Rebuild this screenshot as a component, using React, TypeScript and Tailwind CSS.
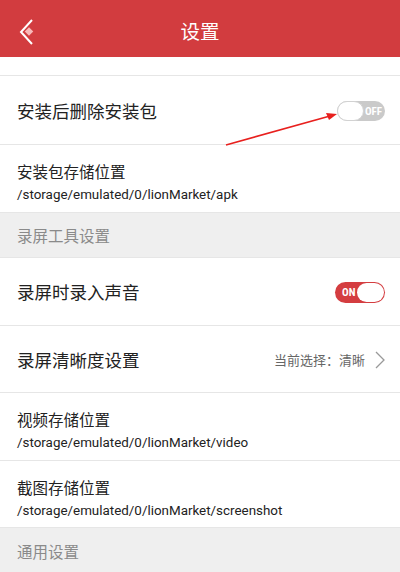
import React from "react";

const cjk = { fontFamily: '"Noto Sans CJK SC", "Noto Sans", sans-serif' };
const latin = { fontFamily: 'Roboto, "Noto Sans CJK SC", sans-serif' };
const cond = { fontFamily: '"Roboto Condensed", "Liberation Sans Narrow", Roboto, sans-serif' };

function ToggleOff() {
  return (
    <div className="relative w-[48px] h-[20px] rounded-full bg-[#cacaca] flex items-center mt-[2px]">
      <div className="absolute left-0 top-0 w-[27px] h-[20px] rounded-full bg-white border border-[#d2d2d2]" />
      <span className="absolute right-[3px] text-[11px] font-bold text-white leading-none" style={cond}>OFF</span>
    </div>
  );
}

function ToggleOn() {
  return (
    <div className="relative w-[50px] h-[21px] rounded-full bg-[#d43d40] flex items-center mt-[1px]">
      <span className="absolute left-[7px] text-[11px] font-bold text-white leading-none" style={cond}>ON</span>
      <div className="absolute right-[1px] top-[1px] w-[27px] h-[19px] rounded-full bg-white" />
    </div>
  );
}

function PathRow({ title, path, h }: { title: string; path: string; h: string }) {
  return (
    <div className={`${h} bg-white flex flex-col pt-[16px] pl-[17px]`}>
      <div className="text-[15.5px] leading-[20px] text-[#222]" style={cjk}>{title}</div>
      <div className="text-[13.4px] leading-[20px] text-[#222] mt-[4px]" style={latin}>{path}</div>
    </div>
  );
}

export default function App() {
  return (
    <div className="relative w-[400px] h-[572px] overflow-hidden bg-white">
      {/* Header */}
      <div className="h-[57px] bg-[#d23c3f] flex items-center relative">
        <svg className="absolute left-[19px] top-[19px]" width="16" height="26" viewBox="0 0 16 26">
          <polyline points="13,1 2,13 13,25" fill="none" stroke="#fff" strokeWidth="2" />
          <rect x="7" y="9.5" width="6" height="6" fill="#f7b9b9" transform="rotate(45 10 12.5)" />
        </svg>
        <div className="w-full text-center text-white text-[19.5px] pt-[5px]" style={cjk}>设置</div>
      </div>
      <div className="h-[19px] bg-white border-b border-[#e6e6e6]" />
      {/* Row 1 */}
      <div className="h-[69px] bg-white border-b border-[#e6e6e6] flex items-center justify-between pl-[17px] pr-[15px]">
        <div className="text-[17.5px] text-[#222] pt-[3px]" style={cjk}>安装后删除安装包</div>
        <ToggleOff />
      </div>
      <PathRow title="安装包存储位置" path="/storage/emulated/0/lionMarket/apk" h="h-[67px]" />
      <div className="h-[46px] bg-[#efefef] border-t border-b border-[#e6e6e6] flex items-center pl-[17px]">
        <div className="text-[15.5px] text-[#8a8a8a] pt-[2px]" style={cjk}>录屏工具设置</div>
      </div>
      <div className="h-[68px] bg-white border-b border-[#e6e6e6] flex items-center justify-between pl-[17px] pr-[15px]">
        <div className="text-[17.5px] text-[#222] pt-[2px]" style={cjk}>录屏时录入声音</div>
        <ToggleOn />
      </div>
      <div className="h-[67px] bg-white border-b border-[#e6e6e6] flex items-center justify-between pl-[17px] pr-[15px]">
        <div className="text-[17.5px] text-[#222] pt-[3px]" style={cjk}>录屏清晰度设置</div>
        <div className="flex items-center gap-[10px] pt-[2px]">
          <div className="text-[13px] text-[#666]" style={cjk}>当前选择：清晰</div>
          <svg width="10" height="18" viewBox="0 0 10 18">
            <polyline points="1,1 9,9 1,17" fill="none" stroke="#999" strokeWidth="1.3" />
          </svg>
        </div>
      </div>
      <div className="border-b border-[#e6e6e6]">
        <PathRow title="视频存储位置" path="/storage/emulated/0/lionMarket/video" h="h-[67px]" />
      </div>
      <PathRow title="截图存储位置" path="/storage/emulated/0/lionMarket/screenshot" h="h-[66px]" />
      <div className="h-[46px] bg-[#efefef] border-t border-[#e6e6e6] flex items-center pl-[17px]">
        <div className="text-[15.5px] text-[#8a8a8a] pt-[2px]" style={cjk}>通用设置</div>
      </div>

      {/* Annotation arrow */}
      <svg className="absolute left-0 top-0 pointer-events-none" width="400" height="572" viewBox="0 0 400 572">
        <line x1="226" y1="145" x2="330" y2="116" stroke="#e8201e" strokeWidth="1.6" />
        <polygon points="337,114 326,113 329,120" fill="#e8201e" />
      </svg>
    </div>
  );
}
